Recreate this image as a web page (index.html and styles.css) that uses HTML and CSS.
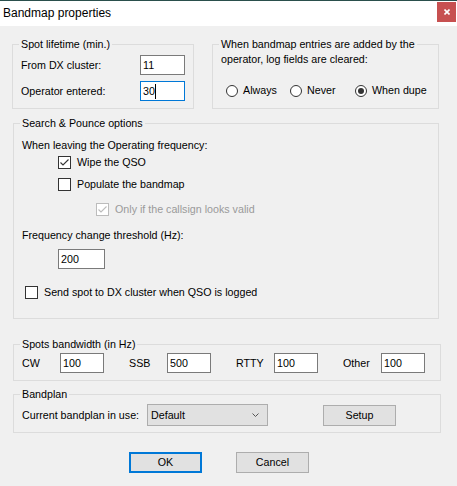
FILE: index.html
```html
<!DOCTYPE html>
<html lang="en">

<head>
    <meta charset="UTF-8">
    <meta name="viewport" content="width=device-width, initial-scale=1.0">
    <title>Bandmap properties</title>

    <link rel="stylesheet" href="styles.css">
</head>

<body>
    <div class="edge"></div>
    <header class="titlebar">
        <span class="title">Bandmap properties</span>
        <span class="close">
            <svg width="6" height="6" viewBox="0 0 6 6"><path d="M0.5 0.5L5.5 5.5M5.5 0.5L0.5 5.5" stroke="#fff" stroke-width="1.6"/></svg>
        </span>
    </header>

    <main class="dialog">
        <div class="top-row">
            <fieldset class="group lifetime">
                <legend>Spot lifetime (min.)</legend>
                <div class="fields">
                    <span>From DX cluster:</span>
                    <div class="textbox">11</div>
                    <span>Operator entered:</span>
                    <div class="textbox focused">30<span class="caret"></span></div>
                </div>
            </fieldset>

            <fieldset class="group cleared">
                <legend>When bandmap entries are added by the</legend>
                <p class="second-line">operator, log fields are cleared:</p>
                <div class="radios">
                    <span class="radio"><i class="circle"></i>Always</span>
                    <span class="radio wide"><i class="circle"></i>Never</span>
                    <span class="radio last"><i class="circle on"></i>When dupe</span>
                </div>
            </fieldset>
        </div>

        <fieldset class="group sp">
            <legend>Search &amp; Pounce options</legend>
            <p class="lead">When leaving the Operating frequency:</p>
            <div class="check-row wipe">
                <i class="box"><svg width="11" height="11" viewBox="0 0 11 11"><path d="M1.5 5.5L4 8L9.5 2.5" fill="none" stroke="#333" stroke-width="1.1"/></svg></i>
                Wipe the QSO
            </div>
            <div class="check-row populate">
                <i class="box"></i>
                Populate the bandmap
            </div>
            <div class="check-row valid">
                <i class="box disabled"><svg width="11" height="11" viewBox="0 0 11 11"><path d="M1.5 5.5L4 8L9.5 2.5" fill="none" stroke="#bcbcbc" stroke-width="1.1"/></svg></i>
                Only if the callsign looks valid
            </div>
            <p class="threshold-label">Frequency change threshold (Hz):</p>
            <div class="textbox threshold">200</div>
            <div class="check-row send">
                <i class="box"></i>
                Send spot to DX cluster when QSO is logged
            </div>
        </fieldset>

        <fieldset class="group bandwidth">
            <legend>Spots bandwidth (in Hz)</legend>
            <div class="bw-row">
                <div class="bw-pair"><span>CW</span><div class="textbox">100</div></div>
                <div class="bw-pair"><span>SSB</span><div class="textbox">500</div></div>
                <div class="bw-pair"><span>RTTY</span><div class="textbox">100</div></div>
                <div class="bw-pair"><span>Other</span><div class="textbox">100</div></div>
            </div>
        </fieldset>

        <fieldset class="group bandplan">
            <legend>Bandplan</legend>
            <div class="plan-row">
                <span class="plan-label">Current bandplan in use:</span>
                <div class="select">
                    <span>Default</span>
                    <svg width="7" height="4" viewBox="0 0 7 4"><path d="M0.5 0.5L3.5 3.5L6.5 0.5" fill="none" stroke="#555"/></svg>
                </div>
                <div class="button setup">Setup</div>
            </div>
        </fieldset>

        <div class="actions">
            <div class="button default">OK</div>
            <div class="button">Cancel</div>
        </div>
    </main>
</body>

</html>
```

FILE: styles.css
```css
* {
    padding: 0;
    margin: 0;
    box-sizing: border-box;
}

body {
    width: 457px;
    height: 486px;
    overflow: hidden;
    background-color: #f0f0f0;
    font-family: "Liberation Sans", Arial, sans-serif;
    font-size: 10.7px;
    line-height: 13px;
    color: #000;
}

.edge {
    height: 1px;
    background-color: #2a4f4c;
}

.titlebar {
    height: 25px;
    background-color: #fff;
    display: flex;
    justify-content: space-between;
    align-items: flex-start;
}

.title {
    padding: 5px 0 0 3px;
    font-size: 12px;
    line-height: 15px;
}

.close {
    width: 19px;
    height: 20px;
    margin: 1px 1px 0 0;
    background-color: #c75050;
    display: flex;
    align-items: center;
    justify-content: center;
}

.dialog {
    padding: 12px 0 0 12px;
}

.top-row {
    display: flex;
    gap: 18px;
}

.group {
    border: 1px solid #dcdcdc;
    padding: 0 8px;
    min-width: 0;
}

.group legend {
    margin-left: -2px;
    padding: 0 2px;
}

.textbox {
    height: 20px;
    border: 1px solid #7a7a7a;
    background-color: #fff;
    padding: 0 2px;
    display: flex;
    align-items: center;
}

.focused {
    border-color: #0078d7;
}

.caret {
    width: 1px;
    height: 15px;
    background-color: #000;
}

/* spot lifetime */
.lifetime {
    width: 182px;
}

.lifetime .fields {
    display: grid;
    grid-template-columns: 1fr 45px;
    row-gap: 6px;
    align-items: center;
    padding: 4px 0 7px;
}

/* log fields cleared */
.cleared {
    width: 227px;
}

.second-line {
    padding-top: 2px;
}

.radios {
    display: flex;
    margin-top: 18px;
    padding: 0 0 11px 5px;
}

.radio {
    display: flex;
    align-items: center;
    gap: 5px;
    width: 64px;
    flex: none;
    white-space: nowrap;
}

.radio.wide {
    width: 65px;
}

.radio.last {
    width: auto;
}

.circle {
    width: 12px;
    height: 12px;
    border: 1px solid #333;
    border-radius: 50%;
    background-color: #fff;
    display: flex;
    align-items: center;
    justify-content: center;
}

.circle.on::after {
    content: "";
    width: 6px;
    height: 6px;
    border-radius: 50%;
    background-color: #333;
}

/* search & pounce */
.sp {
    width: 426px;
    margin: 8px 0 0 1px;
    padding-bottom: 19px;
}

.lead {
    margin-top: 9px;
}

.check-row {
    display: flex;
    align-items: center;
    gap: 6px;
    height: 13px;
}

.box {
    width: 13px;
    height: 13px;
    border: 1px solid #333;
    background-color: #fff;
    display: flex;
}

.box.disabled {
    border-color: #bcbcbc;
}

.wipe {
    margin: 4px 0 0 36px;
}

.populate {
    margin: 9px 0 0 36px;
}

.valid {
    margin: 12px 0 0 74px;
    color: #9a9a9a;
}

.threshold-label {
    margin-top: 13px;
}

.threshold {
    width: 47px;
    margin: 7px 0 0 36px;
}

.send {
    margin: 17px 0 0 3px;
}

/* bandwidth */
.bandwidth {
    width: 428px;
    margin: 19px 0 0 1px;
}

.bw-row {
    display: flex;
    gap: 25px;
    padding: 2px 0 7px;
}

.bw-pair {
    display: flex;
    align-items: center;
}

.bw-pair span {
    width: 38px;
}

.bw-pair .textbox {
    width: 44px;
}

/* bandplan */
.bandplan {
    width: 428px;
    margin: 7px 0 0 1px;
}

.plan-row {
    display: flex;
    align-items: center;
    padding: 3px 0 6px;
}

.plan-label {
    width: 125px;
}

.select {
    width: 121px;
    height: 22px;
    border: 1px solid #adadad;
    background-color: #e1e1e1;
    padding: 0 8px 0 3px;
    display: flex;
    align-items: center;
    justify-content: space-between;
}

.button {
    width: 73px;
    height: 21px;
    border: 1px solid #adadad;
    background-color: #e1e1e1;
    display: flex;
    align-items: center;
    justify-content: center;
}

.setup {
    margin-left: 55px;
}

.actions {
    display: flex;
    gap: 34px;
    margin: 19px 0 0 117px;
}

.button.default {
    border: 2px solid #0078d7;
}
```
